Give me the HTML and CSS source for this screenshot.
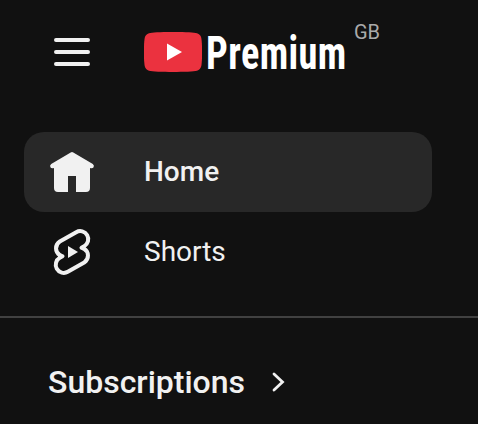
FILE: index.html
```html
<!DOCTYPE html>
<html lang="en">
<head>
<meta charset="utf-8">
<title>YouTube Premium</title>
<link rel="stylesheet" href="styles.css">
</head>
<body>
<header class="masthead">
  <svg class="menu" width="36" height="28" viewBox="0 0 36 28"><path d="M2 2h32M2 14h32M2 26h32"/></svg>
  <svg class="logo" width="58" height="48" viewBox="0 0 58 48">
    <path class="badge" d="M29 4C43 4 50 4.500 53 5.300Q56.500 6.500 57.300 10C58.400 16 58.400 32 57.300 38Q56.500 41.500 53 42.700C47 44.300 11 44.300 5 42.700Q1.500 41.500.7 38C-.4 32-.4 16 .7 10Q1.500 6.500 5 5.300C8 4.500 15 4 29 4Z"/>
    <path class="play" d="M23 15.500V32.500L38 24Z"/>
  </svg>
  <div class="wordmark"><span>Premium</span></div>
  <span class="country">GB</span>
</header>
<nav>
  <a class="item active">
    <svg class="icon" width="48" height="48" viewBox="0 0 48 48"><path class="solid" d="M22.700 4.500Q24 3.700 25.300 4.500L44.800 16Q46.500 17.500 45.600 19.200Q44.500 20.700 42 20V40Q42 44 38 44H28V28H20V44H10Q6 44 6 40V20Q3.500 20.700 2.400 19.200Q1.500 17.500 3.200 16Z"/></svg>
    <span>Home</span>
  </a>
  <a class="item">
    <svg class="icon" width="48" height="48" viewBox="0 0 48 48">
      <path class="ribbon" d="M28.200 4.200A8 8 0 0 1 36.200 18.200L33.500 19.700L36 20.800A8 8 0 0 1 36.200 34.500L19.800 43.800A8 8 0 0 1 11.800 29.800L14.500 28.300L12 27.200A8 8 0 0 1 11.800 13.500Z"/>
      <path class="solid" d="M20 18V30L30 24Z"/>
    </svg>
    <span>Shorts</span>
  </a>
</nav>
<section class="subscriptions">
  <h2>Subscriptions</h2>
  <svg class="chevron" width="14" height="20" viewBox="0 0 14 20"><path d="M2 2L10.500 10L2 18"/></svg>
</section>
</body>
</html>
```
FILE: styles.css
```css
* { box-sizing: border-box; }
body {
  margin: 0;
  height: 424px;
  overflow: hidden;
  background: #111;
  color: #f1f1f1;
  font-family: Roboto, "Liberation Sans", sans-serif;
}
.masthead {
  display: flex;
  align-items: flex-start;
  height: 132px;
  padding: 28px 0 0 54px;
}
.menu { margin: 10px 54px 0 0; }
.menu path { stroke: #f1f1f1; stroke-width: 4; stroke-linecap: round; }
.badge { fill: #eb323f; }
.play { fill: #fff; }
.wordmark {
  width: 141px;
  margin-left: 4px;
  color: #fff;
  font-size: 47px;
  line-height: 50px;
  font-weight: 680;
  font-stretch: 75%;
  letter-spacing: .5px;
}
.wordmark span { display: inline-block; transform: scaleX(.815); transform-origin: 0 0; }
.country {
  margin: -8px 0 0 7px;
  color: #aaa;
  font-size: 20px;
  line-height: 24px;
}
nav { height: 186px; padding: 0 46px 0 24px; border-bottom: 2px solid #414141; }
.item {
  display: flex;
  align-items: center;
  gap: 48px;
  height: 80px;
  padding-left: 24px;
  border-radius: 20px;
  font-size: 28px;
  line-height: 40px;
}
.active { background: #282828; font-weight: 500; }
.icon { overflow: visible; }
.solid { fill: #f1f1f1; }
.ribbon { fill: none; stroke: #f1f1f1; stroke-width: 4; stroke-linejoin: round; }
.subscriptions { display: flex; align-items: center; gap: 27px; padding: 44px 0 0 48px; }
h2 { margin: 0; font-size: 32px; line-height: 40px; font-weight: 500; }
.chevron path { fill: none; stroke: #f1f1f1; stroke-width: 2.8; stroke-linecap: round; }
```
